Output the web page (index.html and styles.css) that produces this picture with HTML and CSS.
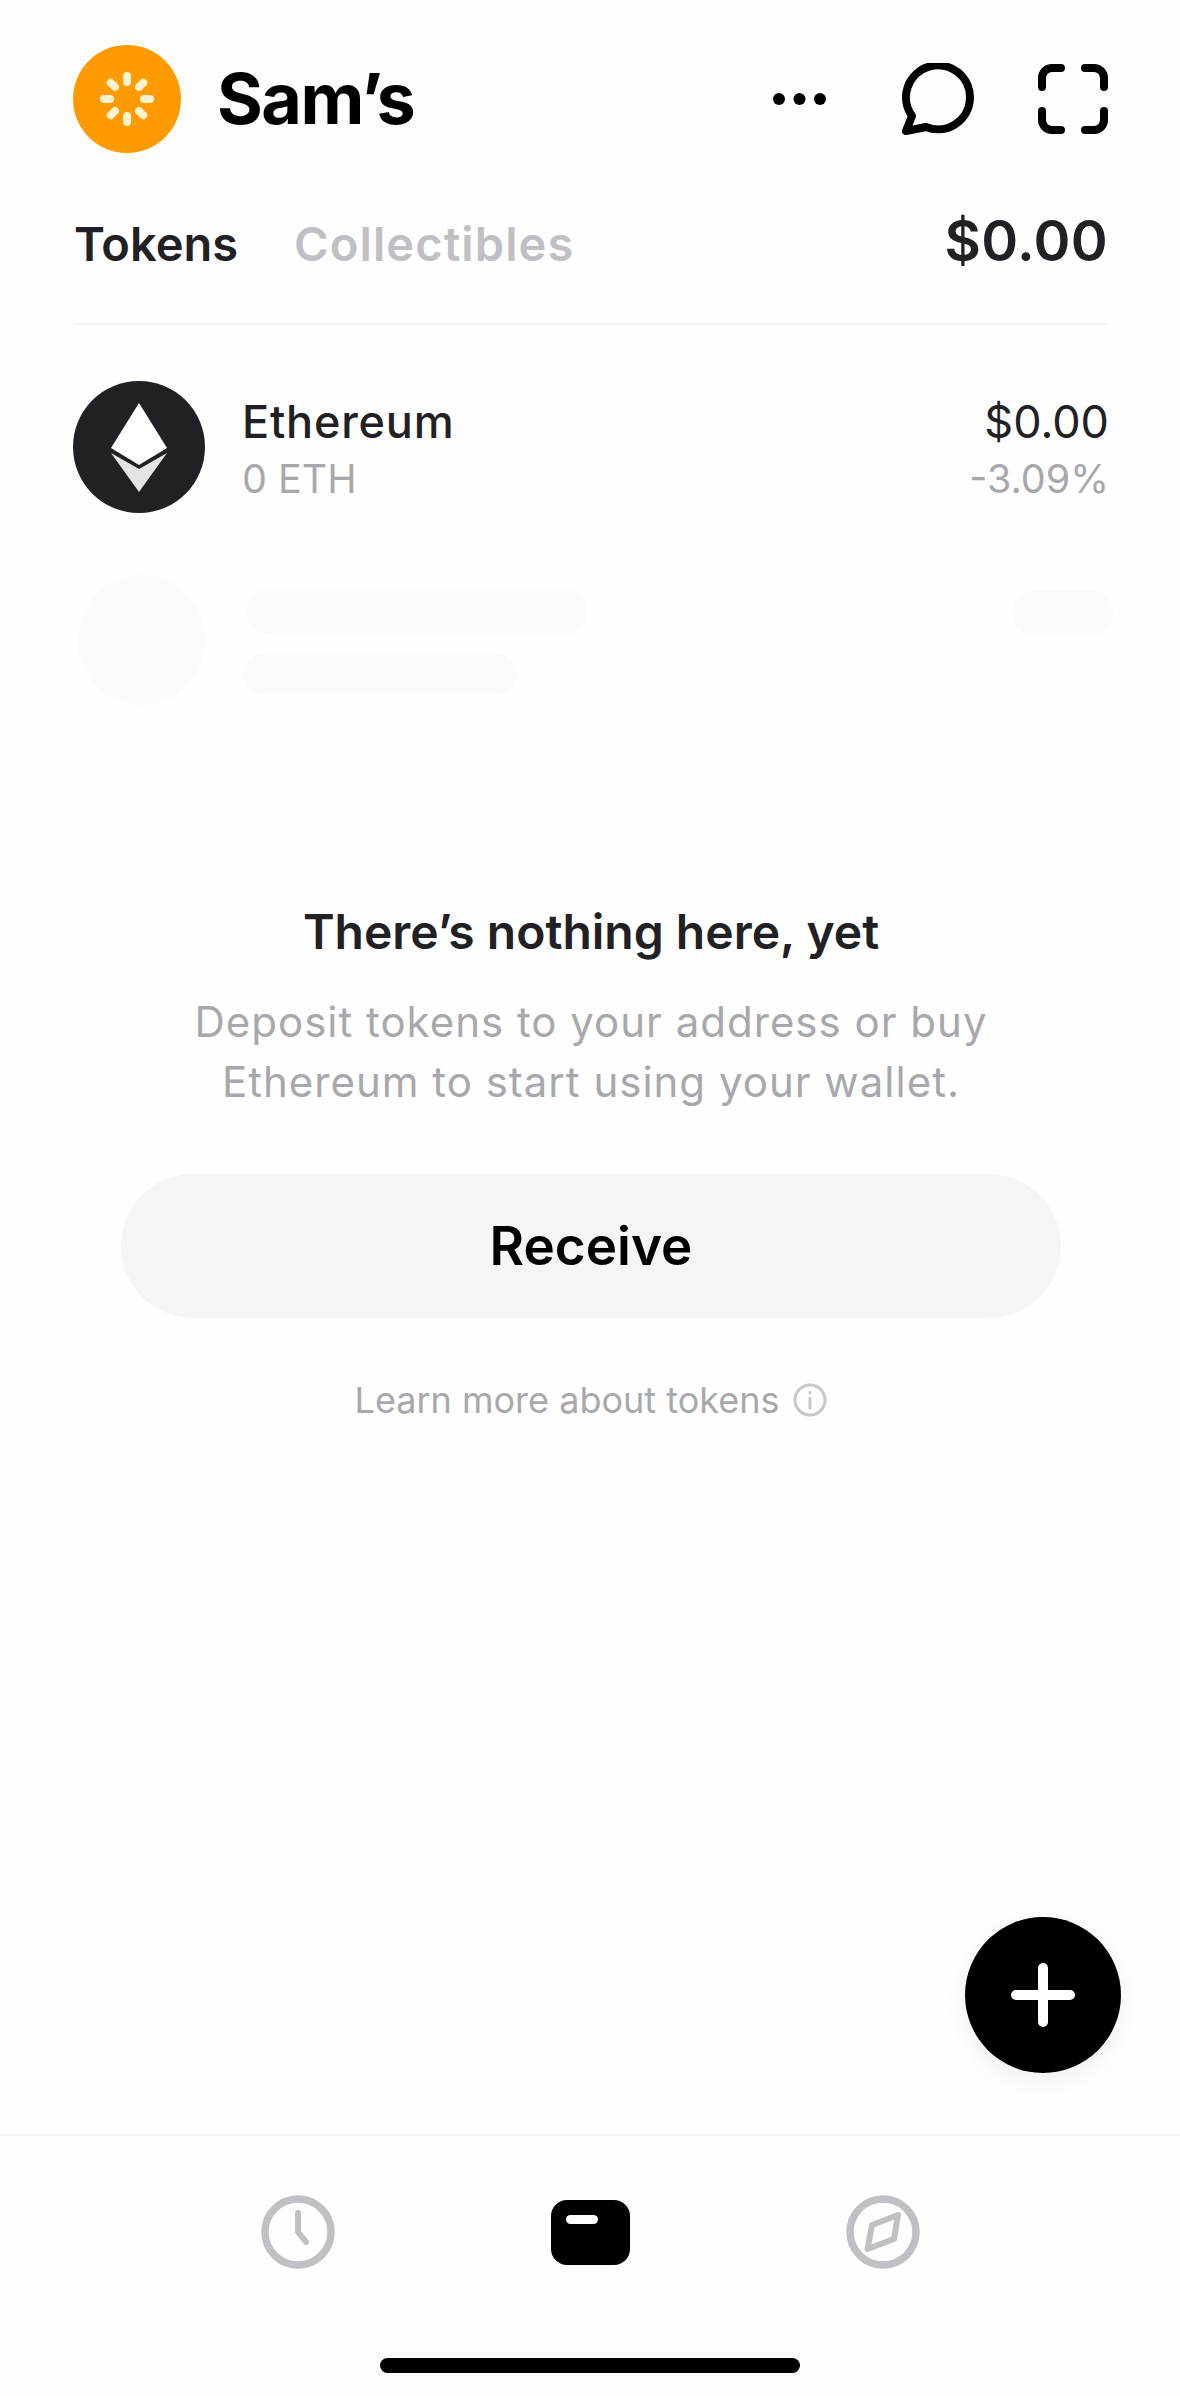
FILE: index.html
```html
<!DOCTYPE html>
<html lang="en">
<head>
<meta charset="utf-8">
<title>Wallet</title>
<link rel="stylesheet" href="styles.css">
</head>
<body>
<div class="app">
  <header class="top">
    <svg class="avatar" viewBox="0 0 108 108">
      <circle cx="54" cy="54" r="54" fill="#ff9a00"/>
      <g fill="#fff3cf">
        <rect x="50" y="27" width="8" height="14" rx="4"/>
        <rect x="50" y="27" width="8" height="14" rx="4" transform="rotate(45 54 54)"/>
        <rect x="50" y="27" width="8" height="14" rx="4" transform="rotate(90 54 54)"/>
        <rect x="50" y="27" width="8" height="14" rx="4" transform="rotate(135 54 54)"/>
        <rect x="50" y="27" width="8" height="14" rx="4" transform="rotate(180 54 54)"/>
        <rect x="50" y="27" width="8" height="14" rx="4" transform="rotate(225 54 54)"/>
        <rect x="50" y="27" width="8" height="14" rx="4" transform="rotate(270 54 54)"/>
        <rect x="50" y="27" width="8" height="14" rx="4" transform="rotate(315 54 54)"/>
      </g>
    </svg>
    <h1 class="wallet-name">Sam’s</h1>
    <div class="actions">
      <svg class="icon-dots" viewBox="0 0 53 12"><circle cx="6" cy="6" r="6"/><circle cx="26.5" cy="6" r="6"/><circle cx="47" cy="6" r="6"/></svg>
      <svg class="icon-chat" viewBox="0 0 75 72"><path d="M11 53 L5 68 L25 64 A32 32 0 1 0 11 53 Z"/></svg>
      <svg class="icon-scan" viewBox="0 0 70 70"><path d="M4 23V14A10 10 0 0 1 14 4H23M47 4H56A10 10 0 0 1 66 14V23M66 47V56A10 10 0 0 1 56 66H47M23 66H14A10 10 0 0 1 4 56V47"/></svg>
    </div>
  </header>

  <nav class="tabs">
    <span class="tab tab-active">Tokens</span>
    <span class="tab tab-muted">Collectibles</span>
    <span class="total">$0.00</span>
  </nav>

  <section class="token-row">
    <svg class="eth" viewBox="0 0 132 132">
      <circle cx="66" cy="66" r="66" fill="#212125"/>
      <path d="M66 22 L94 67 L66 84 L38 67 Z" fill="#fff"/>
      <path d="M38 72 L66 88 L94 72 L66 111 Z" fill="#e4e4e6"/>
    </svg>
    <div class="token-info">
      <span class="token-name">Ethereum</span>
      <span class="token-sub">0 ETH</span>
    </div>
    <div class="token-values">
      <span class="token-value">$0.00</span>
      <span class="token-sub">-3.09%</span>
    </div>
  </section>

  <div class="skeletons">
    <div class="skeleton-row">
      <div class="sk-circle"></div>
      <div class="sk-lines">
        <div class="sk-bar sk-long"></div>
        <div class="sk-bar sk-short"></div>
      </div>
      <div class="sk-bar sk-end"></div>
    </div>
    <div class="skeleton-row skeleton-faded">
      <div class="sk-circle"></div>
      <div class="sk-lines">
        <div class="sk-bar sk-long"></div>
        <div class="sk-bar sk-short"></div>
      </div>
      <div class="sk-bar sk-end"></div>
    </div>
  </div>

  <section class="empty">
    <h2 class="empty-title">There’s nothing here, yet</h2>
    <p class="empty-text">Deposit tokens to your address or buy<br>Ethereum to start using your wallet.</p>
    <button class="receive">Receive</button>
    <div class="learn">
      <span>Learn more about tokens</span>
      <svg class="icon-info" viewBox="0 0 34 34"><circle cx="17" cy="17" r="15"/><path d="M17 15.5V25M17 9.5V10"/></svg>
    </div>
  </section>

  <button class="fab" aria-label="Add">
    <svg viewBox="0 0 64 64"><path d="M32 5V59M5 32H59"/></svg>
  </button>

  <footer class="bottom">
    <div class="nav-icons">
      <svg class="nav-icon" viewBox="0 0 74 74"><circle cx="37" cy="37" r="33"/><path class="nav-detail" d="M37 18V37L45 47"/></svg>
      <svg class="nav-wallet" viewBox="0 0 79 65"><rect width="79" height="65" rx="16" fill="#000"/><rect x="15" y="15" width="32" height="9" rx="4.5" fill="#fff"/></svg>
      <svg class="nav-icon" viewBox="0 0 74 74"><circle cx="37" cy="37" r="33"/><path class="nav-detail" d="M52 20 L26 30 L21.500 54 L48 44 Z"/></svg>
    </div>
    <div class="home-bar"></div>
  </footer>
</div>
</body>
</html>
```

FILE: styles.css
```css
* { box-sizing: border-box; }
html, body { margin: 0; padding: 0; }
body {
  background: #fefefe;
  font-family: "Inter", "Noto Sans", sans-serif;
  color: #212125;
}
.app {
  position: relative;
  width: 1180px;
  height: 2396px;
  display: flex;
  flex-direction: column;
  overflow: hidden;
  background: #fefefe;
}
.top {
  display: flex;
  align-items: center;
  height: 108px;
  margin: 45px 72px 0 73px;
}
.avatar { width: 108px; height: 108px; flex: none; }
.wallet-name {
  margin: 0 0 0 36px;
  font-size: 70px;
  line-height: 80px;
  font-weight: 700;
  color: #000;
  letter-spacing: -1.5px;
}
.actions {
  margin-left: auto;
  display: flex;
  align-items: center;
  gap: 62px;
}
.icon-dots { width: 53px; height: 12px; margin-right: 13px; fill: #000; }
.icon-chat, .icon-scan { fill: none; stroke: #000; stroke-width: 8; stroke-linecap: round; stroke-linejoin: round; }
.icon-chat { width: 75px; height: 72px; }
.icon-scan { width: 70px; height: 70px; }

.tabs {
  display: flex;
  align-items: center;
  height: 62px;
  margin: 60px 72px 0 74px;
  gap: 56px;
}
.tab {
  font-size: 47px;
  line-height: 62px;
  font-weight: 600;
  color: #c0c0c4;
}
.tab-active { color: #212125; }
.tab-muted { letter-spacing: 1.1px; }
.total {
  margin-left: auto;
  margin-top: -6px;
  font-size: 56px;
  line-height: 62px;
  font-weight: 600;
  letter-spacing: 0.3px;
}

.token-row {
  display: flex;
  align-items: center;
  height: 132px;
  margin: 106px 71px 0 73px;
  position: relative;
}
.tabs + .token-row::before {
  content: "";
  position: absolute;
  left: 0;
  right: 1px;
  top: -58px;
  height: 2px;
  background: #f5f5f6;
}
.eth { width: 132px; height: 132px; flex: none; }
.token-info, .token-values {
  display: flex;
  flex-direction: column;
  margin-top: 7px;
}
.token-info { margin-left: 37px; align-items: flex-start; }
.token-values { margin-left: auto; align-items: flex-end; }
.token-name { font-size: 45px; line-height: 57px; font-weight: 550; letter-spacing: 0.8px; }
.token-value { font-size: 45px; line-height: 57px; font-weight: 400; }
.token-sub { font-size: 39.500px; line-height: 58px; color: #a8a8ac; }

.skeletons {
  display: flex;
  flex-direction: column;
  gap: 55px;
  height: 327px;
  margin: 62px 67px 0 78px;
  overflow: hidden;
}
.skeleton-row { display: flex; align-items: flex-start; }
.skeleton-faded { opacity: 0.12; }
.sk-circle { width: 127px; height: 130px; border-radius: 50%; background: #fafbfc; flex: none; }
.sk-lines { margin: 13px 0 0 42px; display: flex; flex-direction: column; gap: 18px; }
.sk-bar { background: #fafbfc; border-radius: 24px; }
.sk-long { width: 340px; height: 47px; }
.sk-short { width: 274px; height: 42px; margin-left: -4px; }
.sk-end { width: 101px; height: 46px; margin: 15px 0 0 auto; }

.empty {
  display: flex;
  flex-direction: column;
  align-items: center;
  padding: 0 119px 0 121px;
}
.empty-title {
  margin: 0;
  font-size: 48px;
  line-height: 60px;
  font-weight: 600;
}
.empty-text {
  margin: 30px 0 0;
  font-size: 42px;
  line-height: 60px;
  letter-spacing: 1px;
  text-align: center;
  color: #a8a8ac;
}
.receive {
  width: 100%;
  height: 144px;
  margin-top: 62px;
  border: 0;
  border-radius: 72px;
  background: #f5f5f7;
  font: 600 53px/60px "Inter", "Noto Sans", sans-serif;
  color: #000;
}
.learn {
  display: flex;
  align-items: center;
  gap: 14px;
  margin-top: 62px;
  height: 40px;
  font-size: 36px;
  color: #a8a8ac;
}
.icon-info { width: 34px; height: 34px; fill: none; stroke: #c8c8cb; stroke-width: 3; stroke-linecap: round; }

.fab {
  position: absolute;
  right: 59px;
  bottom: 323px;
  width: 156px;
  height: 156px;
  padding: 0;
  border: 0;
  border-radius: 50%;
  background: #000;
  display: flex;
  align-items: center;
  justify-content: center;
  box-shadow: 0 8px 30px rgba(0, 0, 0, 0.06);
}
.fab svg { width: 64px; height: 64px; fill: none; stroke: #fff; stroke-width: 10; stroke-linecap: round; }

.bottom {
  margin-top: auto;
  height: 262px;
  border-top: 2px solid #f5f5f6;
  display: flex;
  flex-direction: column;
  align-items: center;
}
.nav-icons {
  display: flex;
  align-items: center;
  gap: 216px;
  margin-top: 59px;
}
.nav-icon { width: 74px; height: 74px; fill: none; stroke: #c0c0c4; stroke-width: 7.500; stroke-linecap: round; stroke-linejoin: round; }
.nav-detail { stroke-width: 6; }
.nav-wallet { width: 79px; height: 65px; }
.home-bar {
  width: 420px;
  height: 15px;
  margin-top: auto;
  margin-bottom: 23px;
  border-radius: 8px;
  background: #000;
}
```
